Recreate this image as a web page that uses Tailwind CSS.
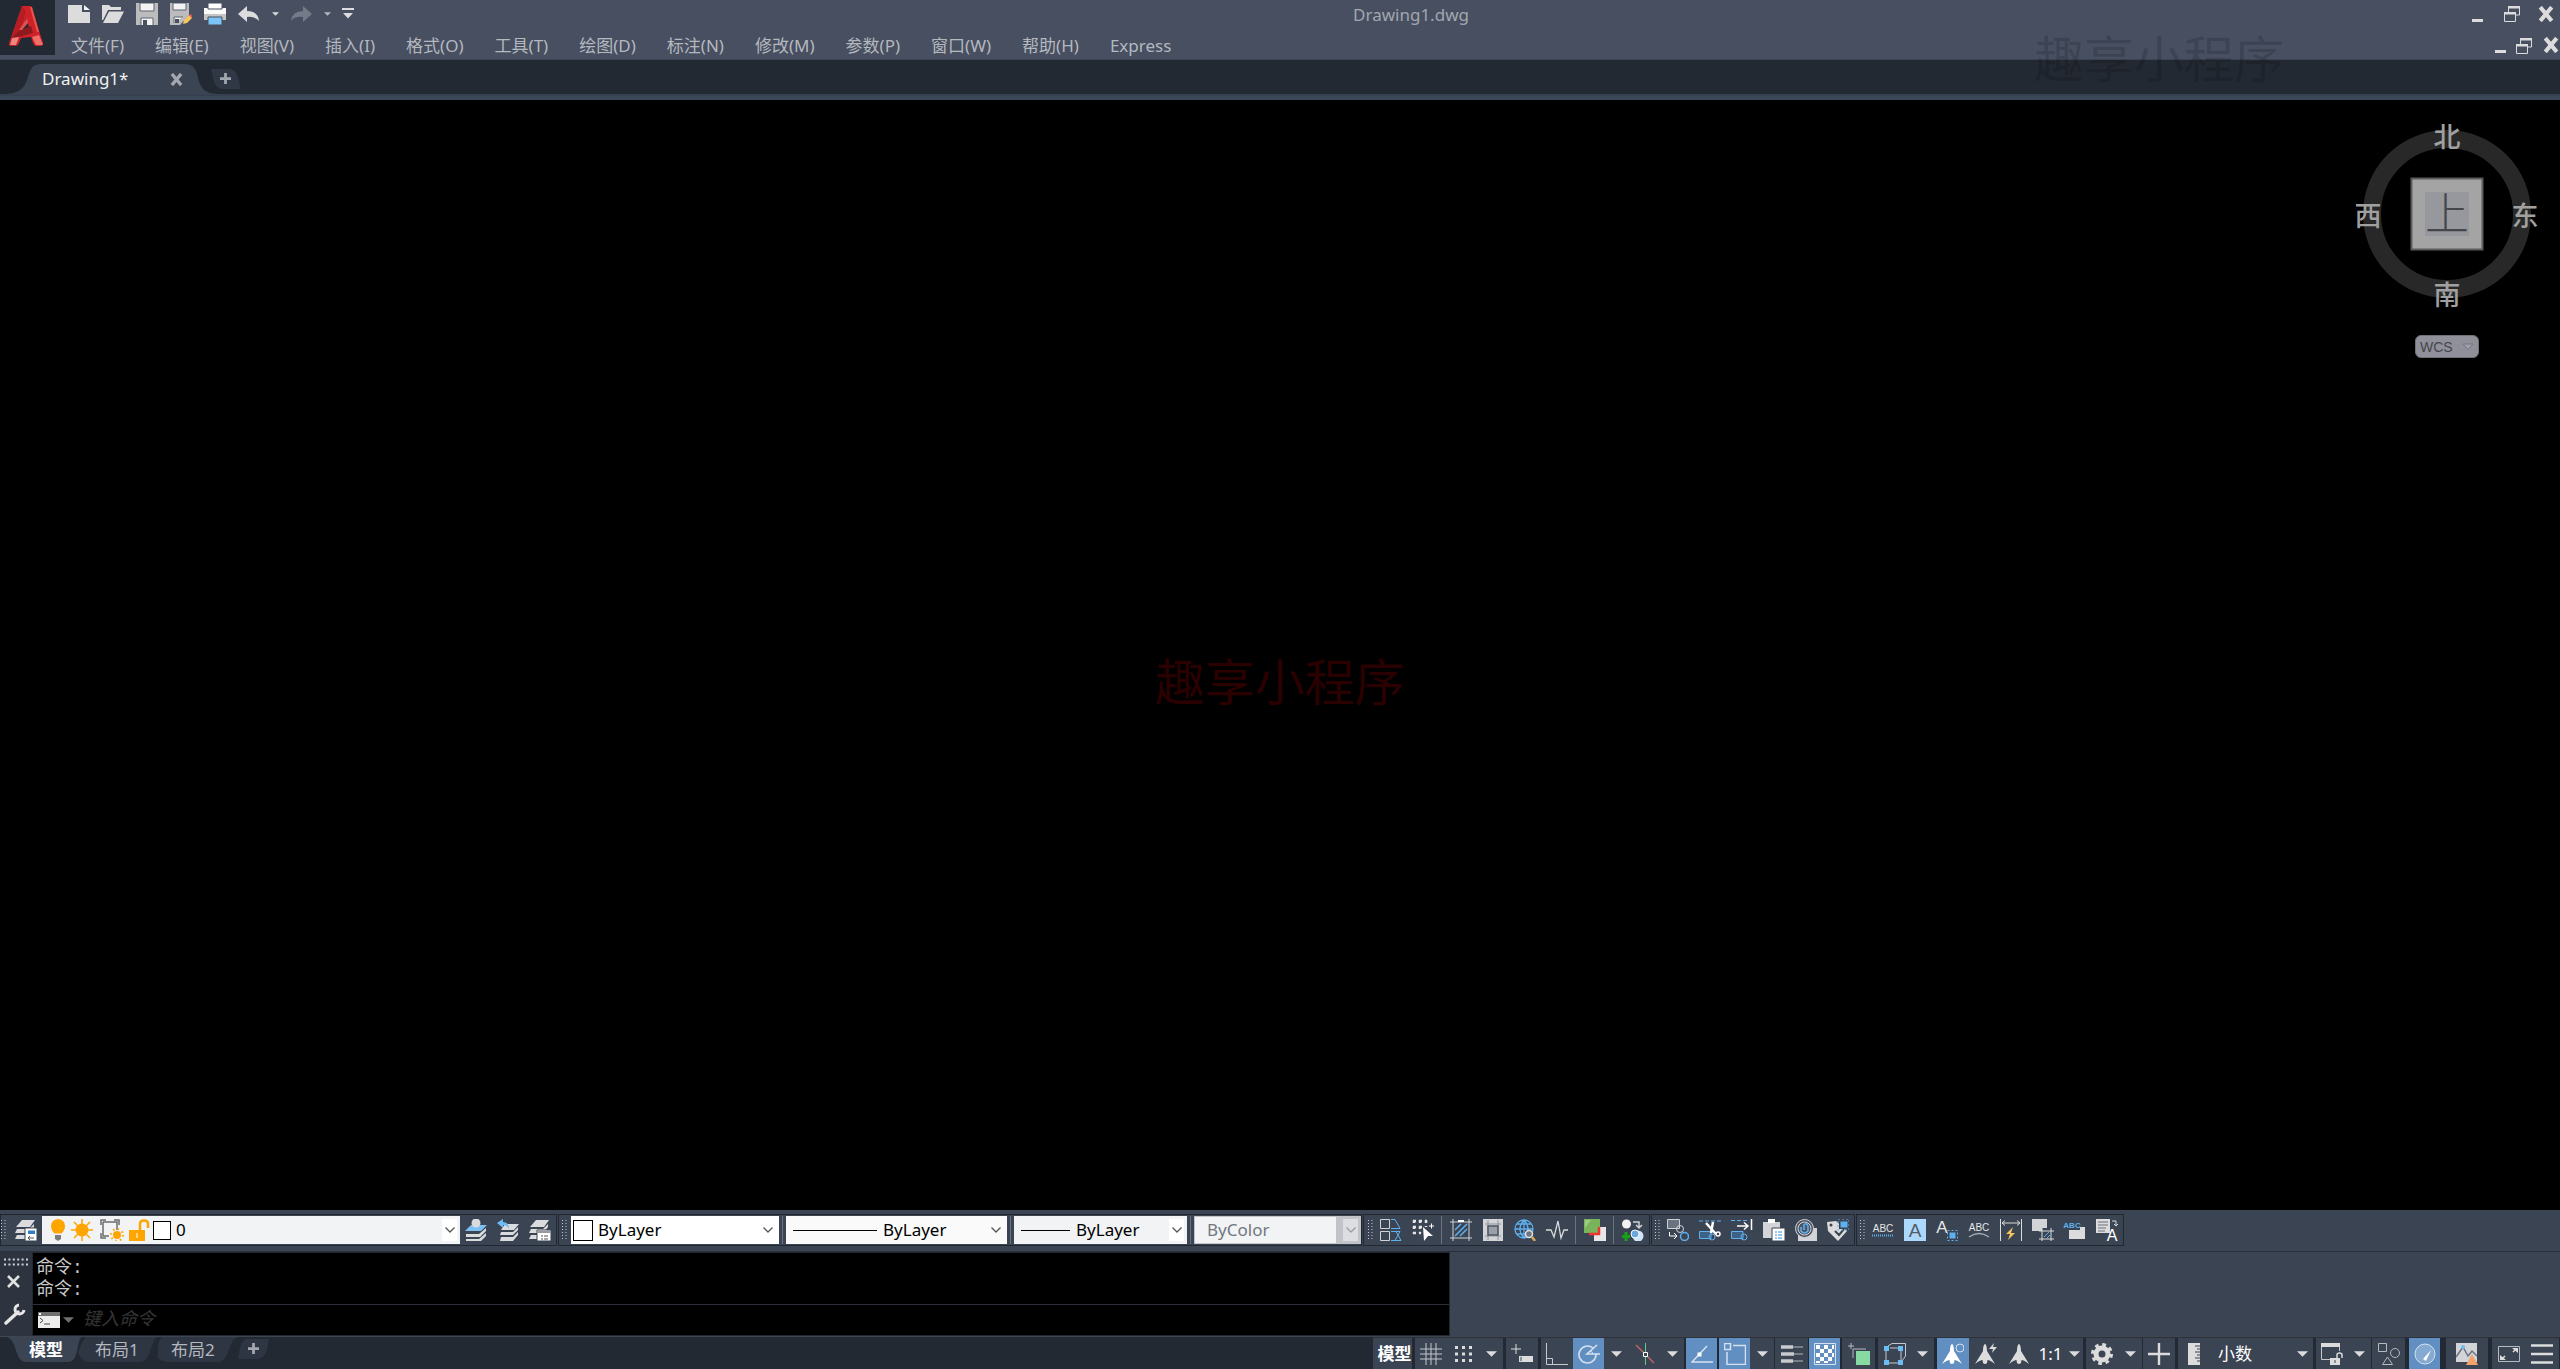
<!DOCTYPE html>
<html lang="zh-CN">
<head>
<meta charset="utf-8">
<meta name="viewport" content="width=device-width, initial-scale=1">
<title>Drawing1.dwg</title>
<script src="https://cdn.jsdelivr.net/npm/@tailwindcss/browser@4"></script>
</head>
<body class="relative flex h-screen flex-col overflow-hidden bg-[#3b4453] font-['Noto_Sans','Noto_Sans_CJK_SC',sans-serif] text-[17px] leading-6 text-[#b4b8bf]">

<!-- Shared glyphs -->
<svg class="hidden">
  <symbol id="tri" viewBox="0 0 12 6"><path d="M0 0H12L6 6Z" fill="currentColor"/></symbol>
  <symbol id="chev" viewBox="0 0 10 6"><path d="M.5 .5L5 5L9.500 .5" fill="none" stroke="currentColor" stroke-width="1.300"/></symbol>
  <symbol id="cross" viewBox="0 0 14 14"><path d="M2 1L12 13M12 1L2 13" fill="none" stroke="currentColor" stroke-width="3.600"/></symbol>
  <symbol id="restore" viewBox="0 0 16 17"><path d="M4.500 7V1.500H15.500V10H11" fill="none" stroke="currentColor"/><path d="M4 1H16V3.500H4ZM0 7H12V9.500H0Z" fill="currentColor"/><path d="M.5 8V16.500H11.500V8" fill="none" stroke="currentColor"/></symbol>
  <symbol id="grip" viewBox="0 0 5 20"><path d="M.5 0V20M4 0V20" fill="none" stroke="#c3c8d0" stroke-dasharray="1 2"/></symbol>
  <symbol id="plus" viewBox="0 0 12 12"><path d="M6 0V12M0 6H12" fill="none" stroke="currentColor" stroke-width="3"/></symbol>
  <symbol id="sheets" viewBox="0 0 22 22"><path d="M7 1H20L15 8H1ZM2 10H14L19 5V8L14 14H0ZM2 16H14L19 11V14L14 20H0Z" fill="#d9dbdd"/></symbol>
  <symbol id="person" viewBox="0 0 22 22"><path d="M11 1C12 1 13 4 13 8L21 21Q16 17 13.500 17L13 20Q11 22 9 20L8.500 17Q6 17 1 21L9 8C9 4 10 1 11 1Z" fill="currentColor"/></symbol>
</svg>

<header class="flex h-[60px] shrink-0 border-b border-[#3b4453] bg-[#474f61]">
  <button aria-label="应用程序菜单" class="flex h-[55px] w-[55px] shrink-0 items-center justify-center bg-[#232933] pr-1 pb-1">
    <svg class="h-10 w-9" viewBox="0 0 36 40">
      <path d="M14 0H23L35 37Q35 40 32 40H28Q26 40 25 37L23 31L13 32L11 37Q10 40 7 40H3Q0 40 1 37Z" fill="#cf2228"/>
      <path d="M14 0L18 6L8 38Q7 40 4 40L1 39Z" fill="#b51d23"/>
      <path d="M18 12L14 26L22 24Z" fill="#232933"/>
      <path d="M12 24L23 20L25 27L3 33Z" fill="#8c1a1e"/><path d="M11 24L19 12L20 17L14 24Z" fill="#e05050"/>
      <path d="M4 32L11 31L8 39L2 39Z" fill="#ee8580"/><path d="M24 31L31 29L35 39H28Z" fill="#ef7069"/>
      <path d="M23 1L30 26" stroke="#ef5350" stroke-width="2"/>
    </svg>
  </button>
  <div class="flex min-w-0 flex-1 flex-col">
    <div class="flex h-[27px] shrink-0 pl-[7px]">
      <div class="flex flex-1 items-center text-[#d9dbdd]">
        <button aria-label="新建" class="flex w-[34px] justify-center"><svg class="size-[22px]" viewBox="0 0 22 22"><path d="M0 2H14V9H22V20H0Z" fill="#dcdcdc"/><path d="M16 2L22 7H16Z" fill="#f4f4f4"/></svg></button>
        <button aria-label="打开" class="flex w-[34px] justify-center"><svg class="size-[22px]" viewBox="0 0 22 22"><path d="M0 2H7L9 4H19V7H6L1 17H0Z" fill="#dcdcdc"/><path d="M7 8.500H22L16 20H1Z" fill="#dcdcdc"/></svg></button>
        <button aria-label="保存" class="flex w-[34px] justify-center"><svg class="size-[22px]" viewBox="0 0 22 22"><path d="M0 0H22V22H0Z" fill="#bcbcbc"/><path d="M4 0H18V8H4Z" fill="#f3f3f3" stroke="#5b6475"/><path d="M5 22V15H17V22" fill="#f3f3f3" stroke="#5b6475"/><path d="M7 17H11V22H7Z" fill="#474f61"/></svg></button>
        <button aria-label="另存为" class="flex w-[34px] justify-center"><svg class="size-[22px]" viewBox="0 0 22 22"><path d="M0 0H19V12L10 22H0Z" fill="#bcbcbc"/><path d="M3 0H16V7H3Z" fill="#f3f3f3" stroke="#5b6475"/><path d="M4 20V14H13" fill="#f3f3f3" stroke="#5b6475"/><path d="M5 16H9V20H5Z" fill="#474f61"/><path d="M13 21L14 17L19 12L22 15L17 20Z" fill="#f6c65a"/><path d="M19 12L21 11L22 13V15Z" fill="#e35d5d"/></svg></button>
        <button aria-label="打印" class="flex w-[34px] justify-center"><svg class="size-[22px]" viewBox="0 0 22 22"><path d="M0 5H22V17H0Z" fill="#fafafa"/><path d="M0 11H22V17H0Z" fill="#c4c4c4"/><path d="M4 0H18V6H4Z" fill="#fff" stroke="#474f61"/><path d="M4 14H18V22H4Z" fill="#7cc4f8" stroke="#474f61"/></svg></button>
        <button aria-label="放弃" class="flex w-[34px] justify-center"><svg class="size-[22px]" viewBox="0 0 22 22"><path d="M0 11L9 3V8Q20 8 21 18Q17 13 9 14V19Z" fill="#dcdcdc"/></svg></button>
        <button aria-label="放弃列表" class="flex w-[18px] justify-center"><svg class="h-1 w-[7px]"><use href="#tri"/></svg></button>
        <button aria-label="重做" class="flex w-[34px] justify-center"><svg class="size-[22px]" viewBox="0 0 22 22"><path d="M22 11L13 3V8Q2 8 1 18Q5 13 13 14V19Z" fill="#737a88"/></svg></button>
        <button aria-label="重做列表" class="flex w-[18px] justify-center"><svg class="h-1 w-[7px] text-[#b4b8bf]"><use href="#tri"/></svg></button>
        <button aria-label="自定义快速访问工具栏" class="flex w-6 justify-center"><svg class="h-[11px] w-3" viewBox="0 0 12 11"><path d="M0 0H12V2H0ZM1 5H11L6 10.500Z" fill="#dcdcdc"/></svg></button>
      </div>
      <h1 class="pt-[3px] pl-[200px] text-[#a2a7b0]">Drawing1.dwg</h1>
      <div class="flex flex-1 items-center justify-end text-[#dcdcdc]">
        <button aria-label="最小化" class="flex h-4 w-[30px] items-end justify-center"><span class="h-[3px] w-[11px] bg-[#dcdcdc]"></span></button>
        <button aria-label="还原" class="flex w-10 justify-center"><svg class="h-[17px] w-4"><use href="#restore"/></svg></button>
        <button aria-label="关闭" class="flex w-7 justify-center"><svg class="size-4"><use href="#cross"/></svg></button>
      </div>
    </div>
    <div class="flex flex-1 items-center justify-between">
      <nav class="flex gap-[31px] pt-[5px] pl-4 whitespace-nowrap">
        <button>文件(F)</button><button>编辑(E)</button><button>视图(V)</button><button>插入(I)</button><button>格式(O)</button><button>工具(T)</button><button>绘图(D)</button><button>标注(N)</button><button>修改(M)</button><button>参数(P)</button><button>窗口(W)</button><button>帮助(H)</button><button>Express</button>
      </nav>
      <div class="flex items-center pt-1 text-[#dcdcdc]">
        <button aria-label="最小化图形" class="flex h-4 w-6 items-end justify-center"><span class="h-[3px] w-[11px] bg-[#dcdcdc]"></span></button>
        <button aria-label="还原图形" class="flex w-6 justify-center"><svg class="h-[17px] w-4"><use href="#restore"/></svg></button>
        <button aria-label="关闭图形" class="flex w-6 justify-end pr-px"><svg class="size-4"><use href="#cross"/></svg></button>
      </div>
    </div>
  </div>
</header>

<!-- File tabs -->
<div class="flex h-[34px] shrink-0 bg-[#232933]">
  <div class="relative flex w-[209px] shrink-0 items-center pt-1 pl-[42px] text-[#f1f1f1]">
    <svg class="absolute top-0 left-0 h-[34px] w-[222px]" viewBox="0 0 222 34"><path d="M2 34C18 34 24 30 28 17C31 7 33 4 42 4H184C193 4 196 8 198 18C201 30 206 34 220 34Z" fill="#3b4453"/></svg>
    <button class="relative">Drawing1*</button>
    <button aria-label="关闭选项卡" class="relative mr-[26px] ml-auto text-[#a3a7ae]"><svg class="size-[13px]"><use href="#cross"/></svg></button>
  </div>
  <button aria-label="新图形" class="relative mt-[3px] flex h-5 w-8 items-center justify-center self-center text-[#a3a7ae]">
    <svg class="absolute inset-0 h-5 w-8" viewBox="0 0 32 20"><path d="M2 0H20C29 0 30 12 32 20H14C5 20 4 8 2 0Z" fill="#303846"/></svg>
    <svg class="relative size-[11px]"><use href="#plus"/></svg>
  </button>
</div>
<div class="h-[6px] shrink-0 border-t-2 border-[#374050] bg-[#3c4757]"></div>

<!-- Drawing area -->
<main class="relative min-h-0 flex-1 bg-black">
  <div class="absolute top-[15px] right-4 flex w-[194px] flex-col items-center">
    <svg class="h-[205px] w-[194px] font-['Noto_Sans_CJK_SC',sans-serif]" viewBox="0 0 194 205" text-anchor="middle">
      <circle cx="97" cy="99" r="75" fill="none" stroke="#282828" stroke-width="18"/>
      <rect x="61.500" y="63.500" width="71" height="71" fill="#a4a4a4" stroke="#5c5c5c" stroke-width="2"/>
      <rect x="75" y="77" width="44" height="44" fill="#97989d"/>
      <text x="97" y="115" font-size="44" font-weight="300" fill="#44464a">上</text>
      <g font-size="27" font-weight="500" fill="#a0a0a0">
        <text x="97" y="32">北</text><text x="18" y="111">西</text><text x="175" y="111">东</text><text x="97" y="190">南</text>
      </g>
    </svg>
    <button class="mt-[15px] flex h-[23px] w-16 items-center justify-between rounded-md border border-[#6f7078] bg-[#8f909a] px-1 font-['Liberation_Sans',sans-serif] text-[14px] text-[#44464c]">WCS
      <svg class="h-2 w-3" viewBox="0 0 12 8"><path d="M1 1H11L6 6.500Z" fill="#9fa1ac" stroke="#73757f"/></svg>
    </button>
  </div>
</main>

<!-- Docked toolbars -->
<div class="flex h-[42px] shrink-0 items-start gap-px border-b border-[#2a313c] pt-1">
  <div class="flex h-8 items-center border border-[#222832]">
    <svg class="mr-1 h-5 w-[5px]"><use href="#grip"/></svg>
    <button aria-label="图层特性" class="flex w-8 justify-center"><svg class="size-[22px]" viewBox="0 0 22 22"><use href="#sheets"/><path d="M10 9H22V22H10Z" fill="#fff" stroke="#3b4453"/><path d="M13 11.500H20V15H13Z" fill="#2f7fc8"/><path d="M13 19H19M15 17L13 19L15 21" fill="none" stroke="#555"/></svg></button>
    <div class="relative flex h-7 w-[418px] items-center bg-[#f1f3f4] pl-[9px] text-black">
      <svg class="h-[22px] w-[100px] shrink-0" viewBox="0 0 100 22">
        <g fill="#ffa500"><path d="M7 0Q14 1 14 7Q14 11 10.500 14.500H3.500Q0 11 0 7Q0 1 7 0Z"/><circle cx="31" cy="11" r="6.500"/><path d="M31 0V22M20 11H42M23 3L39 19M39 3L23 19" stroke="#ffa500" stroke-width="1.500"/></g>
        <path d="M4 16H10V20L7 22L4 20Z" fill="#7d7d7d"/>
        <path d="M50 6V1H55M63 1H68V6M50 14V19H55M52 3H66V11M52 3V17H58" fill="none" stroke="#6c6c6c" stroke-width="1.500"/>
        <circle cx="66" cy="16" r="4" fill="#ffa500"/><circle cx="66" cy="16" r="6" fill="none" stroke="#ffa500" stroke-width="2" stroke-dasharray="1.500 3.200"/>
        <path d="M78 11H94V22H78Z" fill="#ffa500"/><path d="M89 11V5Q89 1.500 93 1.500Q97 1.500 97 5V9" fill="none" stroke="#ffa500" stroke-width="2.500"/><path d="M86 14V19" stroke="#fff"/>
      </svg>
      <span class="ml-0.5 h-[19px] w-[18px] shrink-0 border border-black bg-white"></span>
      <select aria-label="图层" class="h-full min-w-0 flex-1 appearance-none pl-[5px] outline-none"><option>0</option></select>
      <span class="pointer-events-none absolute top-[3px] right-[3px] flex h-[22px] w-[15px] items-center justify-center bg-white text-[#555]"><svg class="h-[6px] w-[10px]"><use href="#chev"/></svg></span>
    </div>
    <button aria-label="将对象的图层置为当前" class="flex w-8 justify-center"><svg class="size-[22px]" viewBox="0 0 22 22"><path d="M6 6H22L16 12H0Z" fill="#7cc0f2"/><path d="M1 15H14L21 9V12L15 18H1ZM1 20H14L21 14V17L16 22H1Z" fill="#d9dbdd"/><circle cx="11" cy="4" r="4.500" fill="#d9dbdd"/></svg></button>
    <button aria-label="上一个图层" class="flex w-8 justify-center"><svg class="size-[22px]" viewBox="0 0 22 22"><path d="M8 5H22L17 11H4ZM4 13H16L21 8V11L16 16H3ZM4 18H16L21 13V16L16 22H3Z" fill="#d9dbdd"/><path d="M0 4L6 0V3Q12 3 12 10Q10 6 6 6V9Z" fill="#6dbcf5"/></svg></button>
    <button aria-label="图层状态管理器" class="flex w-8 justify-center"><svg class="size-[22px]" viewBox="0 0 22 22"><use href="#sheets"/><path d="M8 11H22V22H8Z" fill="#fff" stroke="#3b4453"/><path d="M9 12H22V14H9Z" fill="#999"/><path d="M12 17H14M15 17H19M12 20H14M15 20H19" stroke="#555"/></svg></button>
  </div>

  <div class="flex h-8 items-center border border-[#222832]">
    <svg class="mr-1 ml-[3px] h-5 w-[5px]"><use href="#grip"/></svg>
    <div class="relative flex h-7 w-52 items-center bg-white pl-0.5 text-black">
      <span class="h-[21px] w-5 shrink-0 border border-black"></span>
      <select aria-label="颜色" class="h-full min-w-0 flex-1 appearance-none pl-[5px] outline-none"><option>ByLayer</option></select>
      <svg class="pointer-events-none absolute top-[11px] right-[6px] h-[6px] w-[10px] text-[#555]"><use href="#chev"/></svg>
    </div>
    <span class="mx-[3px] h-7 w-px bg-[#6a7280]"></span>
    <div class="relative flex h-7 w-[221px] items-center bg-[#fafafa] pl-[7px] text-black">
      <span class="h-px w-[84px] shrink-0 bg-black"></span>
      <select aria-label="线型" class="h-full min-w-0 flex-1 appearance-none pl-[6px] outline-none"><option>ByLayer</option></select>
      <svg class="pointer-events-none absolute top-[11px] right-[6px] h-[6px] w-[10px] text-[#555]"><use href="#chev"/></svg>
    </div>
    <span class="mx-[3px] h-7 w-px bg-[#6a7280]"></span>
    <div class="relative flex h-7 w-[173px] items-center bg-[#f1f3f4] pl-[7px] text-black">
      <span class="h-px w-[49px] shrink-0 bg-black"></span>
      <select aria-label="线宽" class="h-full min-w-0 flex-1 appearance-none pl-[6px] outline-none"><option>ByLayer</option></select>
      <span class="pointer-events-none absolute top-[3px] right-[3px] flex h-[22px] w-[15px] items-center justify-center bg-white text-[#555]"><svg class="h-[6px] w-[10px]"><use href="#chev"/></svg></span>
    </div>
    <span class="mx-[3px] h-7 w-px bg-[#6a7280]"></span>
    <div class="relative flex h-7 w-[167px] items-center bg-[#c0c3c8] py-px pr-[25px] pl-px">
      <select aria-label="打印样式" disabled class="h-full w-full appearance-none bg-[#f1f3f4] pl-3 text-[#737780] opacity-100 outline-none"><option>ByColor</option></select>
      <span class="pointer-events-none absolute top-[3px] right-[3px] flex h-[22px] w-[15px] items-center justify-center bg-[#dcdee1] text-[#9a9da3]"><svg class="h-[6px] w-[10px]"><use href="#chev"/></svg></span>
    </div>
  </div>

  <div class="flex h-8 items-center border border-[#222832]">
    <svg class="mr-0.5 ml-1 h-5 w-[5px]"><use href="#grip"/></svg>
    <button aria-label="镜像" class="flex w-8 justify-center"><svg class="size-[22px]" viewBox="0 0 22 22" fill="none" stroke="#cfd2d6"><path d="M.5 .5H9.500V9.500H.5ZM.5 12.500H9.500V21.500H.5Z"/><path d="M11 .5H15L20 9.500H11M20 12.500H11M20 12.500L15 21.500M11 21.500H21L16 12.500" stroke="#5fb0ee"/></svg></button>
    <button aria-label="快速选择" class="flex w-8 justify-center"><svg class="size-[22px]" viewBox="0 0 22 22"><path d="M1 2H15M2 1V15M14 1V8M1 14H9M8 1V14M1 8H12" fill="none" stroke="#e6e6e6" stroke-width="2.500" stroke-dasharray="3 3"/><path d="M11 8L21 17H16L12 22Z" fill="#fff"/><path d="M17 7H22M19.500 4.500V9.500" stroke="#fff"/></svg></button>
    <span class="mr-[3px] ml-0.5 h-7 w-px bg-[#6a7280]"></span>
    <button aria-label="填充" class="flex w-8 justify-center"><svg class="size-[22px]" viewBox="0 0 22 22" fill="none"><path d="M0 3H22M0 19H22M3 0V22M19 0V22" stroke="#cfd2d6"/><path d="M5 11L11 5M5 17L17 5M10 17L17 10" stroke="#5fb0ee" stroke-width="1.500"/><path d="M8 2H14" stroke="#fff" stroke-width="2"/></svg></button>
    <button aria-label="边界" class="flex w-8 justify-center"><svg class="size-[22px]" viewBox="0 0 22 22" fill="none"><path d="M1 0H21V22H1Z" fill="#d2d4d7"/><path d="M3 5H19M3 17H19M6 1V21M16 1V21" stroke="#8d939d"/><path d="M6 7H16V16H6Z" fill="#9aa0a9" stroke="#4d5563" stroke-width="1.500"/></svg></button>
    <button aria-label="查找" class="flex w-8 justify-center"><svg class="size-[22px]" viewBox="0 0 22 22" fill="none"><path d="M10 1A9 9 0 1 0 10 19A9 9 0 1 0 10 1ZM10 1Q2 10 10 19Q18 10 10 1M1 10H19M3 5H17M3 15H15M10 1V19" stroke="#5fb0ee" stroke-width="1.300"/><circle cx="15" cy="15" r="3.500" fill="#6b7684" stroke="#e1e1e1" stroke-width="1.500"/><path d="M18 18L21 22" stroke="#d8a862" stroke-width="2.500"/></svg></button>
    <button aria-label="测量" class="flex w-8 justify-center"><svg class="size-[22px]" viewBox="0 0 22 22" fill="none"><path d="M0 11H5L8 18L12 2L15 19L18 11H22" stroke="#d9dbdd" stroke-width="1.300"/></svg></button>
    <span class="mr-[3px] ml-0.5 h-7 w-px bg-[#6a7280]"></span>
    <button aria-label="绘图次序" class="flex w-8 justify-center"><svg class="size-[22px]" viewBox="0 0 22 22"><path d="M10 8H22V22H10Z" fill="#e7e7e7"/><path d="M0 0H16V14H0Z" fill="#79b35a"/><path d="M1 1H7L1 9Z" fill="#9dcb85"/><path d="M5 15H15V8" fill="none" stroke="#e33" stroke-width="2.500"/></svg></button>
    <span class="mr-[3px] ml-0.5 h-7 w-px bg-[#6a7280]"></span>
    <button aria-label="添加选定对象" class="flex w-8 justify-center"><svg class="size-[22px]" viewBox="0 0 22 22"><circle cx="4.500" cy="5" r="4.500" fill="#f2f2f2"/><path d="M11 3H17V8M14 6L17 9L20 6" fill="none" stroke="#cfd2d6" stroke-width="1.500"/><circle cx="16" cy="17" r="5.500" fill="#cfe4f7"/><circle cx="13" cy="15" r="4" fill="#6aa7dd" stroke="#fff"/><path d="M4 13V22M0 17.500H8" stroke="#15a215" stroke-width="3"/></svg></button>
  </div>

  <div class="flex h-8 items-center border border-[#222832]">
    <svg class="mr-0.5 ml-[3px] h-5 w-[5px]"><use href="#grip"/></svg>
    <button aria-label="重叠对象" class="flex w-8 justify-center"><svg class="size-[22px]" viewBox="0 0 22 22" fill="none" stroke="#cfd2d6"><path d="M.5 .5H12.500V9.500H.5Z" fill="#6b7280"/><circle cx="13" cy="10" r="3.500"/><path d="M2.500 13V17H9M7 14L10 17L7 20" stroke="#fff"/><circle cx="17.500" cy="17.500" r="4" stroke="#5fb0ee" stroke-width="1.500"/></svg></button>
    <button aria-label="剪切" class="flex w-8 justify-center"><svg class="size-[22px]" viewBox="0 0 22 22" fill="none"><path d="M0 2H22" stroke="#5fb0ee" stroke-dasharray="4 2"/><path d="M.5 12.500H12V19.500H.5Z" stroke="#5fb0ee" fill="#3d6285"/><circle cx="13" cy="18" r="3" stroke="#5fb0ee"/><path d="M7 4L17 15M14 3L12 14" stroke="#fff" stroke-width="2.500"/><circle cx="19" cy="15" r="2" stroke="#fff" stroke-width="1.500"/></svg></button>
    <button aria-label="延伸" class="flex w-8 justify-center"><svg class="size-[22px]" viewBox="0 0 22 22" fill="none"><path d="M0 1.500H17" stroke="#5fb0ee" stroke-dasharray="4 2"/><path d="M20.500 0V11M6 7H17M13 3.500L17 7L13 10.500" stroke="#fff" stroke-width="1.500"/><path d="M.5 12.500H12V19.500H.5Z" stroke="#5fb0ee" fill="#3d6285"/><circle cx="13" cy="18" r="3" stroke="#5fb0ee"/></svg></button>
    <button aria-label="粘贴" class="flex w-8 justify-center"><svg class="size-[22px]" viewBox="0 0 22 22"><path d="M0 3H17V19H0Z" fill="#d2d4d7"/><path d="M5 0H12V4H5Z" fill="#fff"/><path d="M9 9H22V22H9Z" fill="#fff" stroke="#3b4453"/><path d="M12 13H14M15 13H19M12 16H14M15 16H19M12 19H14M15 19H19" stroke="#2f8fdd"/></svg></button>
    <button aria-label="附着" class="flex w-8 justify-center"><svg class="size-[22px]" viewBox="0 0 22 22" fill="none"><path d="M3 9H22V22H3Z" fill="#d2d4d7"/><circle cx="9.500" cy="9.500" r="9" fill="#4d5665" stroke="#d2d4d7"/><circle cx="9.500" cy="9.500" r="6.500" stroke="#d2d4d7"/><path d="M6 8V12Q9.500 16 13 12V7Q11 3 9 6V11" stroke="#5fb0ee" stroke-width="1.500"/></svg></button>
    <button aria-label="标签" class="flex w-8 justify-center"><svg class="size-[22px]" viewBox="0 0 22 22"><path d="M0 3L9 2L20 12L11 22L1 12Z" fill="#dcdcdc"/><circle cx="4" cy="6" r="1.500" fill="#3b4453"/><path d="M8 12L12 16L17 10" fill="none" stroke="#3b4453" stroke-width="2"/><path d="M12 0H22V10H12Z" fill="#3b4453"/><path d="M13.500 2.500H20.500V8.500H13.500Z" fill="#5fb0ee"/><path d="M11 0H22V11H11Z" fill="none" stroke="#5fb0ee" stroke-dasharray="2 2"/></svg></button>
  </div>

  <div class="flex h-8 items-center border border-[#222832] font-['Liberation_Sans',sans-serif] leading-none">
    <svg class="mr-0.5 ml-[3px] h-5 w-[5px]"><use href="#grip"/></svg>
    <button aria-label="单行文字" class="flex w-8 justify-center"><svg class="size-[22px] overflow-visible" viewBox="0 0 22 22"><text x="11" y="13" font-size="10" text-anchor="middle" fill="#e6e6e6">ABC</text><path d="M0 16.500H22" stroke="#5fb0ee" stroke-width="2" stroke-dasharray="1 1"/></svg></button>
    <button aria-label="多行文字" class="flex w-8 justify-center"><svg class="size-[22px] overflow-visible" viewBox="0 0 22 22"><path d="M0 0H22V22H0Z" fill="#acd9fb"/><text x="11" y="18" font-size="19" text-anchor="middle" fill="#555d68">A</text></svg></button>
    <button aria-label="文字注释" class="flex w-8 justify-center"><svg class="size-[22px] overflow-visible" viewBox="0 0 22 22"><text x="6" y="14" font-size="17" text-anchor="middle" fill="#e6e6e6">A</text><path d="M13.500 13.500H19.500V19.500H13.500Z" fill="#5fb0ee"/><path d="M11.500 11.500H21.500V21.500H11.500Z" fill="none" stroke="#5fb0ee" stroke-dasharray="2 2"/></svg></button>
    <button aria-label="弧形文字" class="flex w-8 justify-center"><svg class="size-[22px] overflow-visible" viewBox="0 0 22 22"><text x="11" y="12" font-size="10" text-anchor="middle" fill="#e6e6e6">ABC</text><path d="M1 18Q11 11 21 18" fill="none" stroke="#a6abb3" stroke-width="1.500"/></svg></button>
    <button aria-label="快速标注" class="flex w-8 justify-center"><svg class="size-[22px]" viewBox="0 0 22 22" fill="none"><path d="M.5 0V22M21.500 0V22M2 4H20M5 1.500L2 4L5 6.500M17 1.500L20 4L17 6.500" stroke="#dcdcdc"/><path d="M13 8L6 15H10L8 21L15 14H11Z" fill="#f5c35b"/></svg></button>
    <button aria-label="区域覆盖" class="flex w-8 justify-center"><svg class="size-[22px]" viewBox="0 0 22 22" fill="none"><path d="M0 0H15V12H0Z" fill="#d2d4d7"/><path d="M10 9V22H19V9Z" fill="#3b4453"/><path d="M7 12H22M7 20H22M10 9V22M19 9V22" stroke="#dcdcdc"/><path d="M12 18L17 13M15 19L18 16" stroke="#5fb0ee"/></svg></button>
    <button aria-label="文字遮罩" class="flex w-8 justify-center"><svg class="size-[22px] overflow-visible" viewBox="0 0 22 22"><path d="M5 8H21V20H5Z" fill="#dcdcdc"/><path d="M0 0H16V11H0Z" fill="#3b4453"/><text x="8" y="9" font-size="8" font-weight="700" text-anchor="middle" fill="#5fb0ee">ABC</text></svg></button>
    <button aria-label="文字样式" class="flex w-8 justify-center"><svg class="size-[22px] overflow-visible" viewBox="0 0 22 22" fill="none"><path d="M0 0H14V14H0Z" fill="#dcdcdc"/><path d="M2 3H12M2 6H12M2 9H10M2 12H9" stroke="#69717d"/><path d="M16 2H20V7M18 5L20 7L22 5" stroke="#dcdcdc"/><text x="16" y="22" font-size="16" text-anchor="middle" fill="#fff">A</text></svg></button>
  </div>
</div>

<!-- Command window -->
<section class="flex h-[84px] shrink-0">
  <div class="flex w-8 shrink-0 flex-col items-center bg-[#2d3440] pt-1.5 text-[#e1e1e1]">
    <svg class="h-2 w-6" viewBox="0 0 24 8"><path d="M0 1.500H24M0 6.500H24" stroke="#cfd2d6" stroke-width="2" stroke-dasharray="2 2.400"/></svg>
    <button aria-label="关闭命令行" class="mt-[9px] mr-[5px]"><svg class="size-[13px]" viewBox="0 0 13 13"><path d="M1 1L12 12M12 1L1 12" stroke="currentColor" stroke-width="2.600"/></svg></button>
    <button aria-label="自定义" class="mt-[15px] mr-[2px]"><svg class="size-[22px]" viewBox="0 0 22 22"><path d="M2 20L14 9" stroke="#e6e6e6" stroke-width="3.400" stroke-linecap="round"/><path d="M15 2A4.500 4.500 0 1 0 20 7" fill="none" stroke="#e6e6e6" stroke-width="3"/></svg></button>
  </div>
  <div class="flex w-full max-w-[1418px] flex-col border border-[#222832] bg-black font-['Liberation_Mono','Noto_Sans_CJK_SC',monospace] text-[18px]">
    <div class="h-[52px] border-b border-[#2a2f38] pt-[4px] pl-[3px] leading-[22px] text-[#c9c9c9]">
      <p>命令:</p>
      <p>命令:</p>
    </div>
    <div class="flex flex-1 items-center pl-[5px]">
      <button aria-label="最近使用的命令" class="flex items-center gap-[3px] text-[#6f6f6f]">
        <svg class="h-4 w-[22px]" viewBox="0 0 22 16"><path d="M0 0H22V16H0Z" fill="#ececec"/><path d="M0 0H22V4H0Z" fill="#6f6f6f"/><path d="M1 1H3V3H1Z" fill="#fff"/><path d="M2 6L5 8.500L2 11M6 12H12" fill="none" stroke="#444"/></svg>
        <svg class="h-[6px] w-[11px]"><use href="#tri"/></svg>
      </button>
      <input aria-label="键入命令" placeholder="键入命令" class="ml-[9px] h-6 flex-1 bg-transparent italic outline-none placeholder:text-[#343434]">
    </div>
  </div>
</section>

<!-- Layout tabs and status bar -->
<footer class="flex h-[33px] shrink-0 items-start justify-between border-t border-[#3f4650] bg-[#232933]">
  <div class="flex h-[25px] pl-1.5">
    <button class="relative z-10 flex h-[25px] w-[76px] items-center pl-[23px] font-bold text-white"><svg class="absolute top-0 left-0 h-[25px] w-[76px]" viewBox="0 0 76 25"><path d="M0 0C12 2 8 25 20 25H62C74 25 70 2 76 0Z" fill="#3b4453"/></svg><span class="relative">模型</span></button>
    <button class="relative flex h-[25px] w-[76px] items-center pl-[13px]"><svg class="absolute top-0 -left-1 h-[25px] w-20" viewBox="0 0 80 25"><path d="M8 0C4 4 2 10 0 16Q4 25 12 25H62C74 25 72 2 80 0Z" fill="#2e3644"/></svg><span class="relative">布局1</span></button>
    <button class="relative flex h-[25px] w-20 items-center pl-[13px]"><svg class="absolute top-0 left-0 h-[25px] w-20" viewBox="0 0 80 25"><path d="M4 0C0 4 0 10 -3 18Q2 25 10 25H60C72 25 70 2 80 0Z" fill="#2e3644"/></svg><span class="relative">布局2</span></button>
    <button aria-label="新建布局" class="relative flex h-[23px] w-[30px] items-center justify-center text-[#a3a7ae]"><svg class="absolute inset-0 h-[23px] w-8" viewBox="0 0 32 23"><path d="M8 2H31C29 14 28 22 18 22H0C2 10 3 4 8 2Z" fill="#2e3644"/></svg><svg class="relative size-[11px]"><use href="#plus"/></svg></button>
  </div>

  <div class="flex h-8 shrink-0 items-stretch border-t border-[#2a313c] pr-px text-[#dcdcdc]">
    <button class="mr-[3px] w-[39px] bg-[#3b4453] pl-1 font-bold text-white">模型</button>
    <div class="mr-[3px] flex bg-[#3b4453]">
      <button aria-label="栅格" class="flex w-8 items-center justify-center"><svg class="size-[22px]" viewBox="0 0 22 22"><path d="M6 0V22M11 0V22M16 0V22M0 6H22M0 11H22M0 16H22" stroke="#c5c8cd"/></svg></button>
      <button aria-label="捕捉" class="flex w-8 items-center justify-center"><svg class="size-[22px]" viewBox="0 0 22 22"><path d="M3 4.500H20M3 11H20M3 17.500H20" stroke="#dcdcdc" stroke-width="3" stroke-dasharray="3 4"/></svg></button>
      <button aria-label="捕捉选项" class="flex w-6 items-center justify-center"><svg class="h-[6px] w-[11px]"><use href="#tri"/></svg></button>
    </div>
    <button aria-label="动态输入" class="mr-[3px] flex w-8 items-center justify-center bg-[#3b4453]"><svg class="size-[22px]" viewBox="0 0 22 22"><path d="M5 1V11M0 6H10" stroke="#dcdcdc"/><path d="M8 13H22V19H8Z" fill="#dcdcdc"/><path d="M10 14V18" stroke="#3b4453"/></svg></button>
    <div class="mr-0.5 flex bg-[#3b4453]">
      <button aria-label="正交" class="flex w-8 items-center justify-center"><svg class="size-[22px]" viewBox="0 0 22 22"><path d="M.5 0V21.500H22M.5 15.500H6.500V21.500" fill="none" stroke="#c5c8cd"/></svg></button>
      <button aria-label="极轴追踪" class="flex w-[31px] items-center justify-center bg-[#618fc1]"><svg class="size-[22px]" viewBox="0 0 22 22"><path d="M15 5A8.500 8.500 0 1 0 18 11M22 11H9L19 2" fill="none" stroke="#d5e1ef" stroke-width="1.600"/><path d="M12 8Q15 9 15 11" fill="none" stroke="#d5e1ef"/></svg></button>
      <button aria-label="极轴选项" class="flex w-[25px] items-center justify-center"><svg class="h-[6px] w-[11px]"><use href="#tri"/></svg></button>
      <button aria-label="等轴测" class="flex w-[31px] items-center justify-center"><svg class="size-[22px]" viewBox="0 0 22 22" fill="none"><path d="M2 2L20 20" stroke="#c4626a" stroke-width="1.500"/><path d="M11.500 0V22" stroke="#62c98c"/><path d="M9.500 9.500H13.500V13.500H9.500Z" fill="#3b4453" stroke="#fff"/></svg></button>
      <button aria-label="等轴测选项" class="flex w-6 items-center justify-center"><svg class="h-[6px] w-[11px]"><use href="#tri"/></svg></button>
    </div>
    <button aria-label="对象捕捉追踪" class="mr-0.5 flex w-[31px] items-center justify-center bg-[#618fc1]"><svg class="size-[22px]" viewBox="0 0 22 22"><path d="M16 3L1 19H22" fill="none" stroke="#d5e1ef" stroke-width="1.500"/><path d="M6.500 9.500H10.500V13.500H6.500Z" fill="#fff"/></svg></button>
    <div class="mr-px flex bg-[#3b4453]">
      <button aria-label="对象捕捉" class="flex w-[31px] items-center justify-center bg-[#618fc1]"><svg class="size-[22px]" viewBox="0 0 22 22"><path d="M.5 .5H6.500V6.500H.5ZM9 2.500H21.500V21.500H3V9" fill="none" stroke="#d5e1ef" stroke-width="1.500"/></svg></button>
      <button aria-label="对象捕捉选项" class="flex w-6 items-center justify-center"><svg class="h-[6px] w-[11px]"><use href="#tri"/></svg></button>
    </div>
    <button aria-label="线宽显示" class="mr-px flex w-[33px] items-center justify-center bg-[#3b4453]"><svg class="size-[22px]" viewBox="0 0 22 22"><path d="M0 4H22M12 11H22M12 18H22" stroke="#b5b9c0"/><path d="M0 4H12M0 11H13M0 18H12" stroke="#c8cace" stroke-width="3.500"/></svg></button>
    <button aria-label="透明度" class="mr-0.5 flex w-[31px] items-center justify-center bg-[#618fc1]"><svg class="size-[22px]" viewBox="0 0 22 22"><path d="M.5 .5H21.500V21.500H.5Z" fill="none" stroke="#d5e1ef"/><path d="M2 2H6V6H2ZM10 2H14V6H10ZM6 6H10V10H6ZM14 6H18V10H14ZM2 10H6V14H2ZM10 10H14V14H10ZM6 14H10V18H6ZM14 14H18V18H14ZM18 2H20V6H18ZM18 10H20V14H18ZM2 18H6V20H2ZM10 18H14V20H10Z" fill="#fff"/></svg></button>
    <button aria-label="选择循环" class="mr-[3px] flex w-[33px] items-center justify-center bg-[#3b4453]"><svg class="size-[22px]" viewBox="0 0 22 22"><path d="M3 0V6M0 3H6" stroke="#b5b9c0"/><path d="M5 15V6H18" fill="none" stroke="#b5b9c0"/><path d="M8 8H22V22H8Z" fill="#86daa2"/></svg></button>
    <div class="mr-[3px] flex bg-[#3b4453]">
      <button aria-label="三维对象捕捉" class="flex w-[33px] items-center justify-center"><svg class="size-[22px]" viewBox="0 0 22 22" fill="none"><path d="M6 5H15M2 7V17M5 20H15M17 7V17M4 3L8 .5H21.500V13L18 18" stroke="#c5c8cd"/><path d="M0 3H5V8H0ZM14 3H19V8H14ZM0 17H5V22H0ZM14 17H19V22H14Z" fill="#6dbcf5"/></svg></button>
      <button aria-label="三维捕捉选项" class="flex w-[23px] items-center justify-center"><svg class="h-[6px] w-[11px]"><use href="#tri"/></svg></button>
    </div>
    <div class="mr-[3px] flex bg-[#3b4453]">
      <button aria-label="注释可见性" class="flex w-8 items-center justify-center bg-[#618fc1] text-white"><svg class="size-[22px]" viewBox="0 0 22 22"><g transform="translate(-1 0)"><use href="#person" width="22" height="22"/></g><circle cx="18" cy="5" r="4" fill="none" stroke="#d5e1ef"/></svg></button>
      <button aria-label="自动缩放" class="flex w-[33px] items-center justify-center"><svg class="size-[22px]" viewBox="0 0 22 22"><g transform="translate(-1 0)"><use href="#person" width="22" height="22"/></g><path d="M19 0L14 6H18L17 10L22 4H18Z" fill="#dcdcdc"/></svg></button>
      <button aria-label="注释比例图标" class="flex w-[33px] items-center justify-center"><svg class="size-[22px]"><use href="#person"/></svg></button>
      <button class="flex w-12 items-center justify-center gap-[6px] text-white">1:1<svg class="h-[6px] w-[11px] text-[#dcdcdc]"><use href="#tri"/></svg></button>
    </div>
    <div class="mr-px flex bg-[#3b4453]">
      <button aria-label="切换工作空间" class="flex w-8 items-center justify-center"><svg class="size-[22px]" viewBox="0 0 22 22" fill="none"><circle cx="11" cy="11" r="6" stroke="#dcdcdc" stroke-width="5"/><circle cx="11" cy="11" r="9.500" stroke="#dcdcdc" stroke-width="3" stroke-dasharray="3.700 3.760"/></svg></button>
      <button aria-label="工作空间选项" class="flex w-6 items-center justify-center"><svg class="h-[6px] w-[11px]"><use href="#tri"/></svg></button>
    </div>
    <button aria-label="注释监视器" class="mr-[3px] flex w-8 items-center justify-center bg-[#3b4453]"><svg class="size-[22px]" viewBox="0 0 22 22"><path d="M11 0V22M0 11H22" stroke="#dcdcdc" stroke-width="2.400"/></svg></button>
    <div class="relative mr-[3px] flex w-[135px] items-center bg-[#3b4453]">
      <svg class="mr-4 ml-[10px] h-[22px] w-3 shrink-0" viewBox="0 0 12 22"><path d="M0 0H12V22H0Z" fill="#dcdcdc"/><path d="M7 3H12M9 6H12M7 9H12M9 12H12M7 15H12M9 18H12" stroke="#3b4453"/></svg>
      <select aria-label="当前图形单位" class="h-full w-full appearance-none pl-0.5 text-white outline-none"><option>小数</option></select>
      <svg class="pointer-events-none absolute top-[13px] right-[5px] h-[6px] w-[11px]"><use href="#tri"/></svg>
    </div>
    <div class="mr-px flex bg-[#3b4453]">
      <button aria-label="锁定用户界面" class="flex w-8 items-center justify-center"><svg class="size-[22px]" viewBox="0 0 22 22" fill="none"><path d="M.5 2V16.500H9M18.500 2V8" stroke="#c5c8cd"/><path d="M0 0H19V4H0Z" fill="#dcdcdc"/><path d="M9 15H19V22H9Z" fill="#dcdcdc"/><path d="M16 15V12Q16 10 18.500 10Q21 10 21 12V15" stroke="#dcdcdc" stroke-width="1.500"/><path d="M14 17V20" stroke="#3b4453"/></svg></button>
      <button aria-label="锁定选项" class="flex w-[23px] items-center justify-center"><svg class="h-[6px] w-[11px]"><use href="#tri"/></svg></button>
    </div>
    <button aria-label="隔离对象" class="mr-1 flex w-[33px] items-center justify-center bg-[#3b4453]"><svg class="size-[22px]" viewBox="0 0 22 22" fill="none" stroke="#b5b9c0"><path d="M.5 .5H8.500V8.500H.5ZM4.500 21.500L9.500 14L14.500 21.500Z"/><circle cx="17" cy="10" r="4.500"/></svg></button>
    <button aria-label="硬件加速" class="mr-[6px] flex w-[31px] items-center justify-center bg-[#618fc1]"><svg class="size-[22px]" viewBox="0 0 22 22"><circle cx="11" cy="11" r="10" fill="#84aad2" stroke="#d5e1ef"/><path d="M9 16L17 7L12 18Z" fill="#fff"/></svg></button>
    <button aria-label="性能" class="mr-1 flex w-[42px] items-center justify-center bg-[#3b4453]"><svg class="size-[22px]" viewBox="0 0 22 22"><path d="M0 0H21V19H0Z" fill="#d2d4d7"/><path d="M0 14L7 4L12 13L16 8L21 13" fill="none" stroke="#6b7280" stroke-width="1.500"/><circle cx="7" cy="4" r="2" fill="#6dbcf5"/><path d="M16 11L22 22H10Z" fill="#f2a26b"/></svg></button>
    <div class="flex bg-[#3b4453]">
      <button aria-label="全屏显示" class="flex w-[33px] items-center justify-center"><svg class="size-[22px]" viewBox="0 0 22 22"><path d="M.5 3.500H21.500V18.500H.5Z" fill="none" stroke="#b5b9c0"/><path d="M14 5H20V10ZM2 12V17H8Z" fill="#dcdcdc"/><path d="M18 6L15 9M4 16L7 13" stroke="#dcdcdc" stroke-width="1.500"/></svg></button>
      <button aria-label="自定义状态栏" class="flex w-[34px] items-center justify-center"><svg class="size-[22px]" viewBox="0 0 22 22"><path d="M0 2.500H22M0 11H22M0 19.500H22" stroke="#dcdcdc" stroke-width="2.500"/></svg></button>
    </div>
  </div>
</footer>

<!-- Watermarks over the window -->
<p class="pointer-events-none absolute inset-x-0 top-1/2 -mt-7 text-center text-[50px] leading-none whitespace-nowrap text-[#2b0000]">趣享小程序</p>
<p class="pointer-events-none absolute top-[34px] right-[276px] text-[50px] leading-none whitespace-nowrap text-black/15">趣享小程序</p>
</body>
</html>
